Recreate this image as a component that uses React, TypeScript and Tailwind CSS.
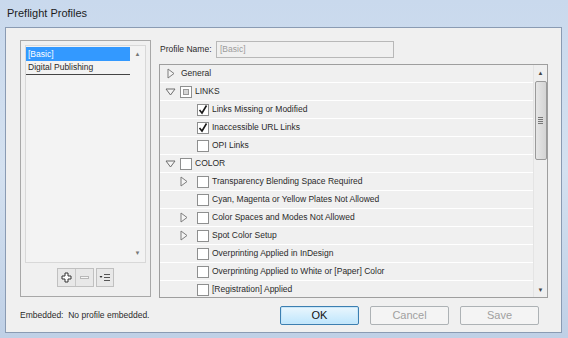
import React from "react";

const font = { fontFamily: '"Liberation Sans", Arial, sans-serif' };

function RightTri() {
  return (
    <svg width="8" height="11" viewBox="0 0 8 11">
      <path d="M1 1 L7 5.5 L1 10 Z" fill="#f4f4f4" stroke="#7d7d7d" strokeWidth="1" />
    </svg>
  );
}

function DownTri() {
  return (
    <svg width="11" height="8" viewBox="0 0 11 8">
      <path d="M1 1 L10 1 L5.5 7 Z" fill="#f4f4f4" stroke="#6d6d6d" strokeWidth="1" />
    </svg>
  );
}

function Box({ state }: { state?: "on" | "mixed" }) {
  return (
    <div className="relative h-[12px] w-[12px] shrink-0 border border-[#8e8f8f] bg-white">
      {state === "on" && (
        <svg className="absolute left-0 top-0" width="10" height="10" viewBox="0 0 10 10">
          <path d="M1.5 5 L4 8 L8.5 0.5" fill="none" stroke="#1a1a1a" strokeWidth="1.6" />
        </svg>
      )}
      {state === "mixed" && (
        <div className="absolute left-[2px] top-[2px] h-[6px] w-[6px] border border-[#9a9a9a] bg-[#d6d6d6]" />
      )}
    </div>
  );
}

type Row = { depth: 0 | 1; tri?: "r" | "d"; box?: "none" | "off" | "on" | "mixed"; label: string };

const rows: Row[] = [
  { depth: 0, tri: "r", box: "none", label: "General" },
  { depth: 0, tri: "d", box: "mixed", label: "LINKS" },
  { depth: 1, box: "on", label: "Links Missing or Modified" },
  { depth: 1, box: "on", label: "Inaccessible URL Links" },
  { depth: 1, box: "off", label: "OPI Links" },
  { depth: 0, tri: "d", box: "off", label: "COLOR" },
  { depth: 1, tri: "r", box: "off", label: "Transparency Blending Space Required" },
  { depth: 1, box: "off", label: "Cyan, Magenta or Yellow Plates Not Allowed" },
  { depth: 1, tri: "r", box: "off", label: "Color Spaces and Modes Not Allowed" },
  { depth: 1, tri: "r", box: "off", label: "Spot Color Setup" },
  { depth: 1, box: "off", label: "Overprinting Applied in InDesign" },
  { depth: 1, box: "off", label: "Overprinting Applied to White or [Paper] Color" },
  { depth: 1, box: "off", label: "[Registration] Applied" },
];

function TreeRow({ row }: { row: Row }) {
  return (
    <div className="flex h-[18px] shrink-0 items-center border-b border-white">
      {row.depth === 0 ? (
        <>
          <div className="flex w-[18px] shrink-0 items-center justify-center pl-[3px]">
            {row.tri === "r" ? <RightTri /> : <DownTri />}
          </div>
          <div className="w-[2px]" />
          {row.box !== "none" && <Box state={row.box === "off" ? undefined : (row.box as "mixed")} />}
          <span className={row.box === "none" ? "ml-[1px]" : "ml-[3px]"}>{row.label}</span>
        </>
      ) : (
        <>
          <div className="flex w-[37px] shrink-0 items-center justify-end pr-[9px]">
            {row.tri === "r" && <RightTri />}
          </div>
          <Box state={row.box === "on" ? "on" : undefined} />
          <span className="ml-[3px]">{row.label}</span>
        </>
      )}
    </div>
  );
}

function Btn({ label, primary }: { label: string; primary?: boolean }) {
  return (
    <div
      className={`flex h-[19px] w-[79px] items-center justify-center rounded-[2px] text-[11px] ${
        primary
          ? "border border-[#3c7fb1] bg-gradient-to-b from-[#eaf6fd] to-[#bee6fd] text-[#111] shadow-[inset_0_0_0_1px_#c8e6f8]"
          : "border border-[#adb2b5] bg-[#f4f4f4] text-[#a0a0a0]"
      }`}
    >
      {label}
    </div>
  );
}

export default function App() {
  return (
    <div className="h-[338px] w-[568px] overflow-hidden bg-[#c4d3e6] text-[#2a2a2a]" style={font}>
      <div className="flex h-full flex-col bg-gradient-to-b from-[#c9d9ed] via-[#d4e1f0] to-[#bfd0e6]">
        {/* title bar */}
        <div className="flex h-[27px] shrink-0 items-center pl-[7px] text-[11px] text-[#1c1c1c]">Preflight Profiles</div>
        <div className="flex flex-1 pb-[6px] pl-[5px] pr-[7px]">
          <div className="flex flex-1 flex-col border border-[#8a9bb3] bg-[#f0f0f0] text-[8.5px]">
            <div className="flex flex-1 pl-[14px] pt-[12px]">
              {/* left pane */}
              <div className="flex h-[257px] w-[131px] shrink-0 flex-col border border-[#a8a8a8] p-[4px]">
                <div className="flex h-[218px] border border-[#d8d8d8] bg-[#f3f3f3]">
                  <div className="flex flex-1 flex-col pt-[1px]">
                    <div className="flex h-[14px] items-center bg-[#3399ff] pl-[2px] text-white">[Basic]</div>
                    <div className="flex h-[14px] items-center border-b-[1.5px] border-[#444] pl-[2px]">Digital Publishing</div>
                  </div>
                  <div className="flex w-[15px] flex-col items-center justify-between py-[4px] text-[6px] text-[#777]">
                    <span>▲</span>
                    <span>▼</span>
                  </div>
                </div>
                <div className="mt-[5px] flex justify-center">
                  <div className="flex h-[19px] w-[37px] border border-[#c0c0c0] bg-[#e8e8e8]">
                    <div className="flex w-[18px] items-center justify-center border-r border-[#c8c8c8]">
                      <svg width="11" height="11" viewBox="0 0 11 11">
                        <path d="M4 1 H7 V4 H10 V7 H7 V10 H4 V7 H1 V4 H4 Z" fill="#fff" stroke="#333" strokeWidth="1" />
                      </svg>
                    </div>
                    <div className="flex flex-1 items-center justify-center">
                      <div className="h-[3px] w-[9px] border border-[#b8b8b8] bg-[#f6f6f6]" />
                    </div>
                  </div>
                  <div className="ml-[2px] flex h-[19px] w-[18px] items-center justify-center border border-[#c0c0c0] bg-[#e8e8e8]">
                    <svg width="12" height="9" viewBox="0 0 12 9">
                      <path d="M0.5 3 L3.5 3 L2 5 Z" fill="#333" />
                      <path d="M5 1.5 H11 M5 4.5 H11 M5 7.5 H11" stroke="#555" strokeWidth="1" />
                    </svg>
                  </div>
                </div>
              </div>
              {/* right pane */}
              <div className="ml-[8px] flex flex-1 flex-col pr-[13px]">
                <div className="flex h-[18px] items-center">
                  <span className="w-[57px] whitespace-nowrap pl-[1px]">Profile Name:</span>
                  <div className="flex h-[17px] w-[178px] items-center border border-[#b8b8b8] bg-[#f0f0f0] pl-[3px] text-[#9c9c9c]">
                    [Basic]
                  </div>
                </div>
                <div className="mt-[6px] flex h-[234px] border border-[#9e9e9e] bg-[#f0f0f0]">
                  <div className="flex flex-1 flex-col overflow-hidden">
                    {rows.map((r) => (
                      <TreeRow key={r.label} row={r} />
                    ))}
                  </div>
                  <div className="flex w-[14px] flex-col items-center border-l border-[#e4e4e4] bg-[#efefef] text-[6px] text-[#444]">
                    <div className="flex h-[16px] items-center">▲</div>
                    <div className="flex h-[79px] w-[12px] flex-col items-center justify-center rounded-[2px] border border-[#9a9a9a] bg-gradient-to-r from-[#e6e6e6] to-[#d4d4d4]">
                      <div className="h-[1px] w-[5px] bg-[#777]" />
                      <div className="mt-[1px] h-[1px] w-[5px] bg-[#777]" />
                      <div className="mt-[1px] h-[1px] w-[5px] bg-[#777]" />
                      <div className="mt-[1px] h-[1px] w-[5px] bg-[#777]" />
                    </div>
                    <div className="flex-1" />
                    <div className="flex h-[14px] items-center">▼</div>
                  </div>
                </div>
              </div>
            </div>
            {/* bottom */}
            <div className="flex h-[34px] items-center pl-[14px] pr-[22px]">
              <span className="w-[260px]">Embedded:&nbsp; No profile embedded.</span>
              <div className="flex gap-[11px]">
                <Btn label="OK" primary />
                <Btn label="Cancel" />
                <Btn label="Save" />
              </div>
            </div>
          </div>
        </div>
      </div>
    </div>
  );
}
